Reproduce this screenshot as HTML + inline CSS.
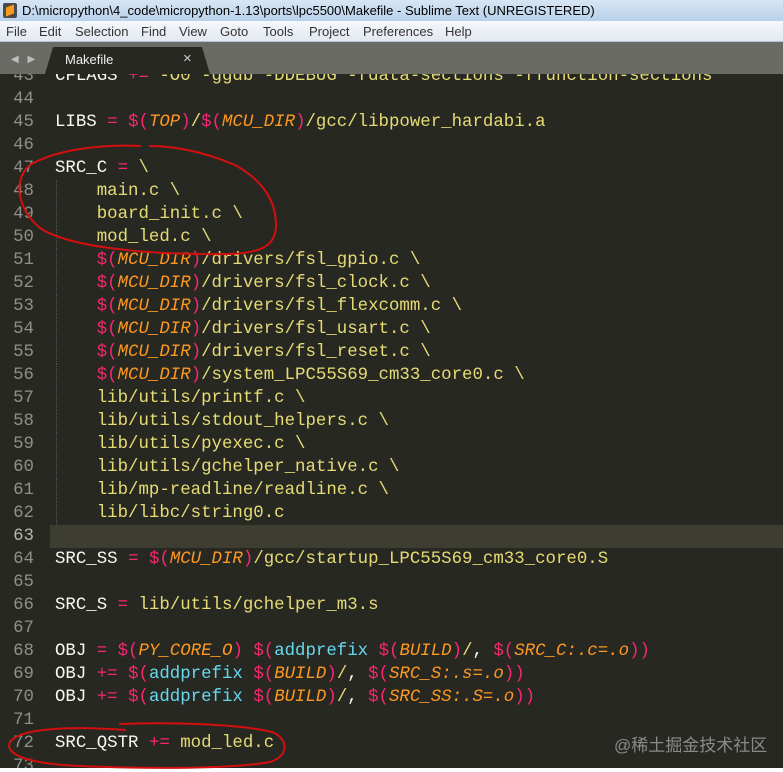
<!DOCTYPE html>
<html><head><meta charset="utf-8">
<style>
*{margin:0;padding:0;box-sizing:border-box}
body{width:783px;height:772px;overflow:hidden;background:#fff;font-family:"Liberation Sans",sans-serif;position:relative}
#title{position:absolute;left:0;top:0;width:783px;height:21px;background:linear-gradient(#d7e6f5,#b9d1ea);font-size:13px;color:#000;line-height:21px;padding-left:22px;white-space:nowrap}
#title .ic{position:absolute;left:3px;top:3px;width:14px;height:15px;background:#4a4a4a;border-radius:2px}
#title .ic b{position:absolute;left:3px;top:3px;width:8px;height:9px;background:#f89a1c;transform:skewY(-20deg)}
#menu{position:absolute;left:0;top:21px;width:783px;height:21px;background:linear-gradient(#f5f7fb,#e3e9f1);border-bottom:1px solid #b8c0cc;font-size:13px;color:#333;line-height:21px;white-space:nowrap}
#menu span{position:absolute;top:0}
#tabs{position:absolute;left:0;top:42px;width:783px;height:32px;background:#6b6b66}
#tabs .arr{position:absolute;left:11px;top:12px;color:#bdbdbd;font-size:10px;letter-spacing:3px}
#tab{position:absolute;left:45px;top:5px;width:165px;height:27px;background:#272822;clip-path:polygon(8px 0,157px 0,165px 27px,0 27px)}
#tab .t{position:absolute;left:20px;top:5px;color:#f0f0f0;font-size:13px}
#tab .x{position:absolute;left:138px;top:3px;color:#ccc;font-size:15px}
#code{position:absolute;left:0;top:74px;width:783px;height:694px;background:#272822;overflow:hidden}
#inner{position:absolute;left:0;top:-9.5px;width:783px}
.l{height:23px;line-height:23px;font-family:"Liberation Mono",monospace;font-size:17.4px;white-space:pre;color:#f8f8f2;position:relative}
.n{display:inline-block;width:34px;text-align:right;color:#8f908a;margin-right:21px}
.cur{background:linear-gradient(90deg,#272822 50px,#3e3d32 50px)}
.cur .n{color:#b5b5b0}
.g{position:absolute;left:56px;top:0;height:23px;border-left:1px dotted #555}
.k{color:#f92672}.o{color:#fd971f;font-style:italic}.y{color:#e6db74}.c{color:#66d9ef}.w{color:#f8f8f2}
#wm{position:absolute;left:614px;top:731px;font-size:17px;color:#8a8a8a;font-family:"Liberation Sans","Noto Sans CJK SC",sans-serif}
svg{position:absolute;left:0;top:0}
</style></head><body>
<div id="title"><div class="ic"><b></b></div>D:\micropython\4_code\micropython-1.13\ports\lpc5500\Makefile - Sublime Text (UNREGISTERED)</div>
<div id="menu"><span style="left:6px">File</span><span style="left:39px">Edit</span><span style="left:75px">Selection</span><span style="left:141px">Find</span><span style="left:179px">View</span><span style="left:220px">Goto</span><span style="left:263px">Tools</span><span style="left:309px">Project</span><span style="left:363px">Preferences</span><span style="left:445px">Help</span></div>
<div id="tabs"><div class="arr">◀ ▶</div><div id="tab"><span class="t">Makefile</span><span class="x">×</span></div></div>
<div id="code"><div id="inner">
<div class="l"><span class="n">43</span>CFLAGS <span class="k">+=</span> <span class="y">-O0 -ggdb -DDEBUG -fdata-sections -ffunction-sections</span></div>
<div class="l"><span class="n">44</span></div>
<div class="l"><span class="n">45</span>LIBS <span class="k">=</span> <span class="k">$(</span><span class="o">TOP</span><span class="k">)</span><span class="y">/</span><span class="k">$(</span><span class="o">MCU_DIR</span><span class="k">)</span><span class="y">/gcc/libpower_hardabi.a</span></div>
<div class="l"><span class="n">46</span></div>
<div class="l"><span class="n">47</span>SRC_C <span class="k">=</span> <span class="y">\</span></div>
<div class="l"><i class="g"></i><span class="n">48</span><span class="y">    main.c \</span></div>
<div class="l"><i class="g"></i><span class="n">49</span><span class="y">    board_init.c \</span></div>
<div class="l"><i class="g"></i><span class="n">50</span><span class="y">    mod_led.c \</span></div>
<div class="l"><i class="g"></i><span class="n">51</span>    <span class="k">$(</span><span class="o">MCU_DIR</span><span class="k">)</span><span class="y">/drivers/fsl_gpio.c \</span></div>
<div class="l"><i class="g"></i><span class="n">52</span>    <span class="k">$(</span><span class="o">MCU_DIR</span><span class="k">)</span><span class="y">/drivers/fsl_clock.c \</span></div>
<div class="l"><i class="g"></i><span class="n">53</span>    <span class="k">$(</span><span class="o">MCU_DIR</span><span class="k">)</span><span class="y">/drivers/fsl_flexcomm.c \</span></div>
<div class="l"><i class="g"></i><span class="n">54</span>    <span class="k">$(</span><span class="o">MCU_DIR</span><span class="k">)</span><span class="y">/drivers/fsl_usart.c \</span></div>
<div class="l"><i class="g"></i><span class="n">55</span>    <span class="k">$(</span><span class="o">MCU_DIR</span><span class="k">)</span><span class="y">/drivers/fsl_reset.c \</span></div>
<div class="l"><i class="g"></i><span class="n">56</span>    <span class="k">$(</span><span class="o">MCU_DIR</span><span class="k">)</span><span class="y">/system_LPC55S69_cm33_core0.c \</span></div>
<div class="l"><i class="g"></i><span class="n">57</span><span class="y">    lib/utils/printf.c \</span></div>
<div class="l"><i class="g"></i><span class="n">58</span><span class="y">    lib/utils/stdout_helpers.c \</span></div>
<div class="l"><i class="g"></i><span class="n">59</span><span class="y">    lib/utils/pyexec.c \</span></div>
<div class="l"><i class="g"></i><span class="n">60</span><span class="y">    lib/utils/gchelper_native.c \</span></div>
<div class="l"><i class="g"></i><span class="n">61</span><span class="y">    lib/mp-readline/readline.c \</span></div>
<div class="l"><i class="g"></i><span class="n">62</span><span class="y">    lib/libc/string0.c</span></div>
<div class="l cur"><span class="n">63</span></div>
<div class="l"><span class="n">64</span>SRC_SS <span class="k">=</span> <span class="k">$(</span><span class="o">MCU_DIR</span><span class="k">)</span><span class="y">/gcc/startup_LPC55S69_cm33_core0.S</span></div>
<div class="l"><span class="n">65</span></div>
<div class="l"><span class="n">66</span>SRC_S <span class="k">=</span> <span class="y">lib/utils/gchelper_m3.s</span></div>
<div class="l"><span class="n">67</span></div>
<div class="l"><span class="n">68</span>OBJ <span class="k">=</span> <span class="k">$(</span><span class="o">PY_CORE_O</span><span class="k">)</span> <span class="k">$(</span><span class="c">addprefix</span> <span class="k">$(</span><span class="o">BUILD</span><span class="k">)</span><span class="y">/</span>, <span class="k">$(</span><span class="o">SRC_C:.c=.o</span><span class="k">))</span></div>
<div class="l"><span class="n">69</span>OBJ <span class="k">+=</span> <span class="k">$(</span><span class="c">addprefix</span> <span class="k">$(</span><span class="o">BUILD</span><span class="k">)</span><span class="y">/</span>, <span class="k">$(</span><span class="o">SRC_S:.s=.o</span><span class="k">))</span></div>
<div class="l"><span class="n">70</span>OBJ <span class="k">+=</span> <span class="k">$(</span><span class="c">addprefix</span> <span class="k">$(</span><span class="o">BUILD</span><span class="k">)</span><span class="y">/</span>, <span class="k">$(</span><span class="o">SRC_SS:.S=.o</span><span class="k">))</span></div>
<div class="l"><span class="n">71</span></div>
<div class="l"><span class="n">72</span>SRC_QSTR <span class="k">+=</span> <span class="y">mod_led.c</span></div>
<div class="l"><span class="n">73</span></div>
</div></div>
<div id="wm">@稀土掘金技术社区</div>
<svg width="783" height="772" viewBox="0 0 783 772"><g fill="none" stroke="#d40f0f" stroke-width="2" stroke-linecap="round">
<path d="M140 146 C100 144 55 150 30 165 C12 180 18 210 40 228 C70 248 150 255 230 254 C262 253 276 245 276 225 C276 200 262 180 235 165 C200 150 170 146 150 146"/>
<path d="M125 730 C70 726 20 728 10 742 C4 755 30 764 80 766 C150 769 230 769 270 762 C290 756 288 738 272 732 C240 724 170 722 120 724"/>
</g></svg>
</body></html>
